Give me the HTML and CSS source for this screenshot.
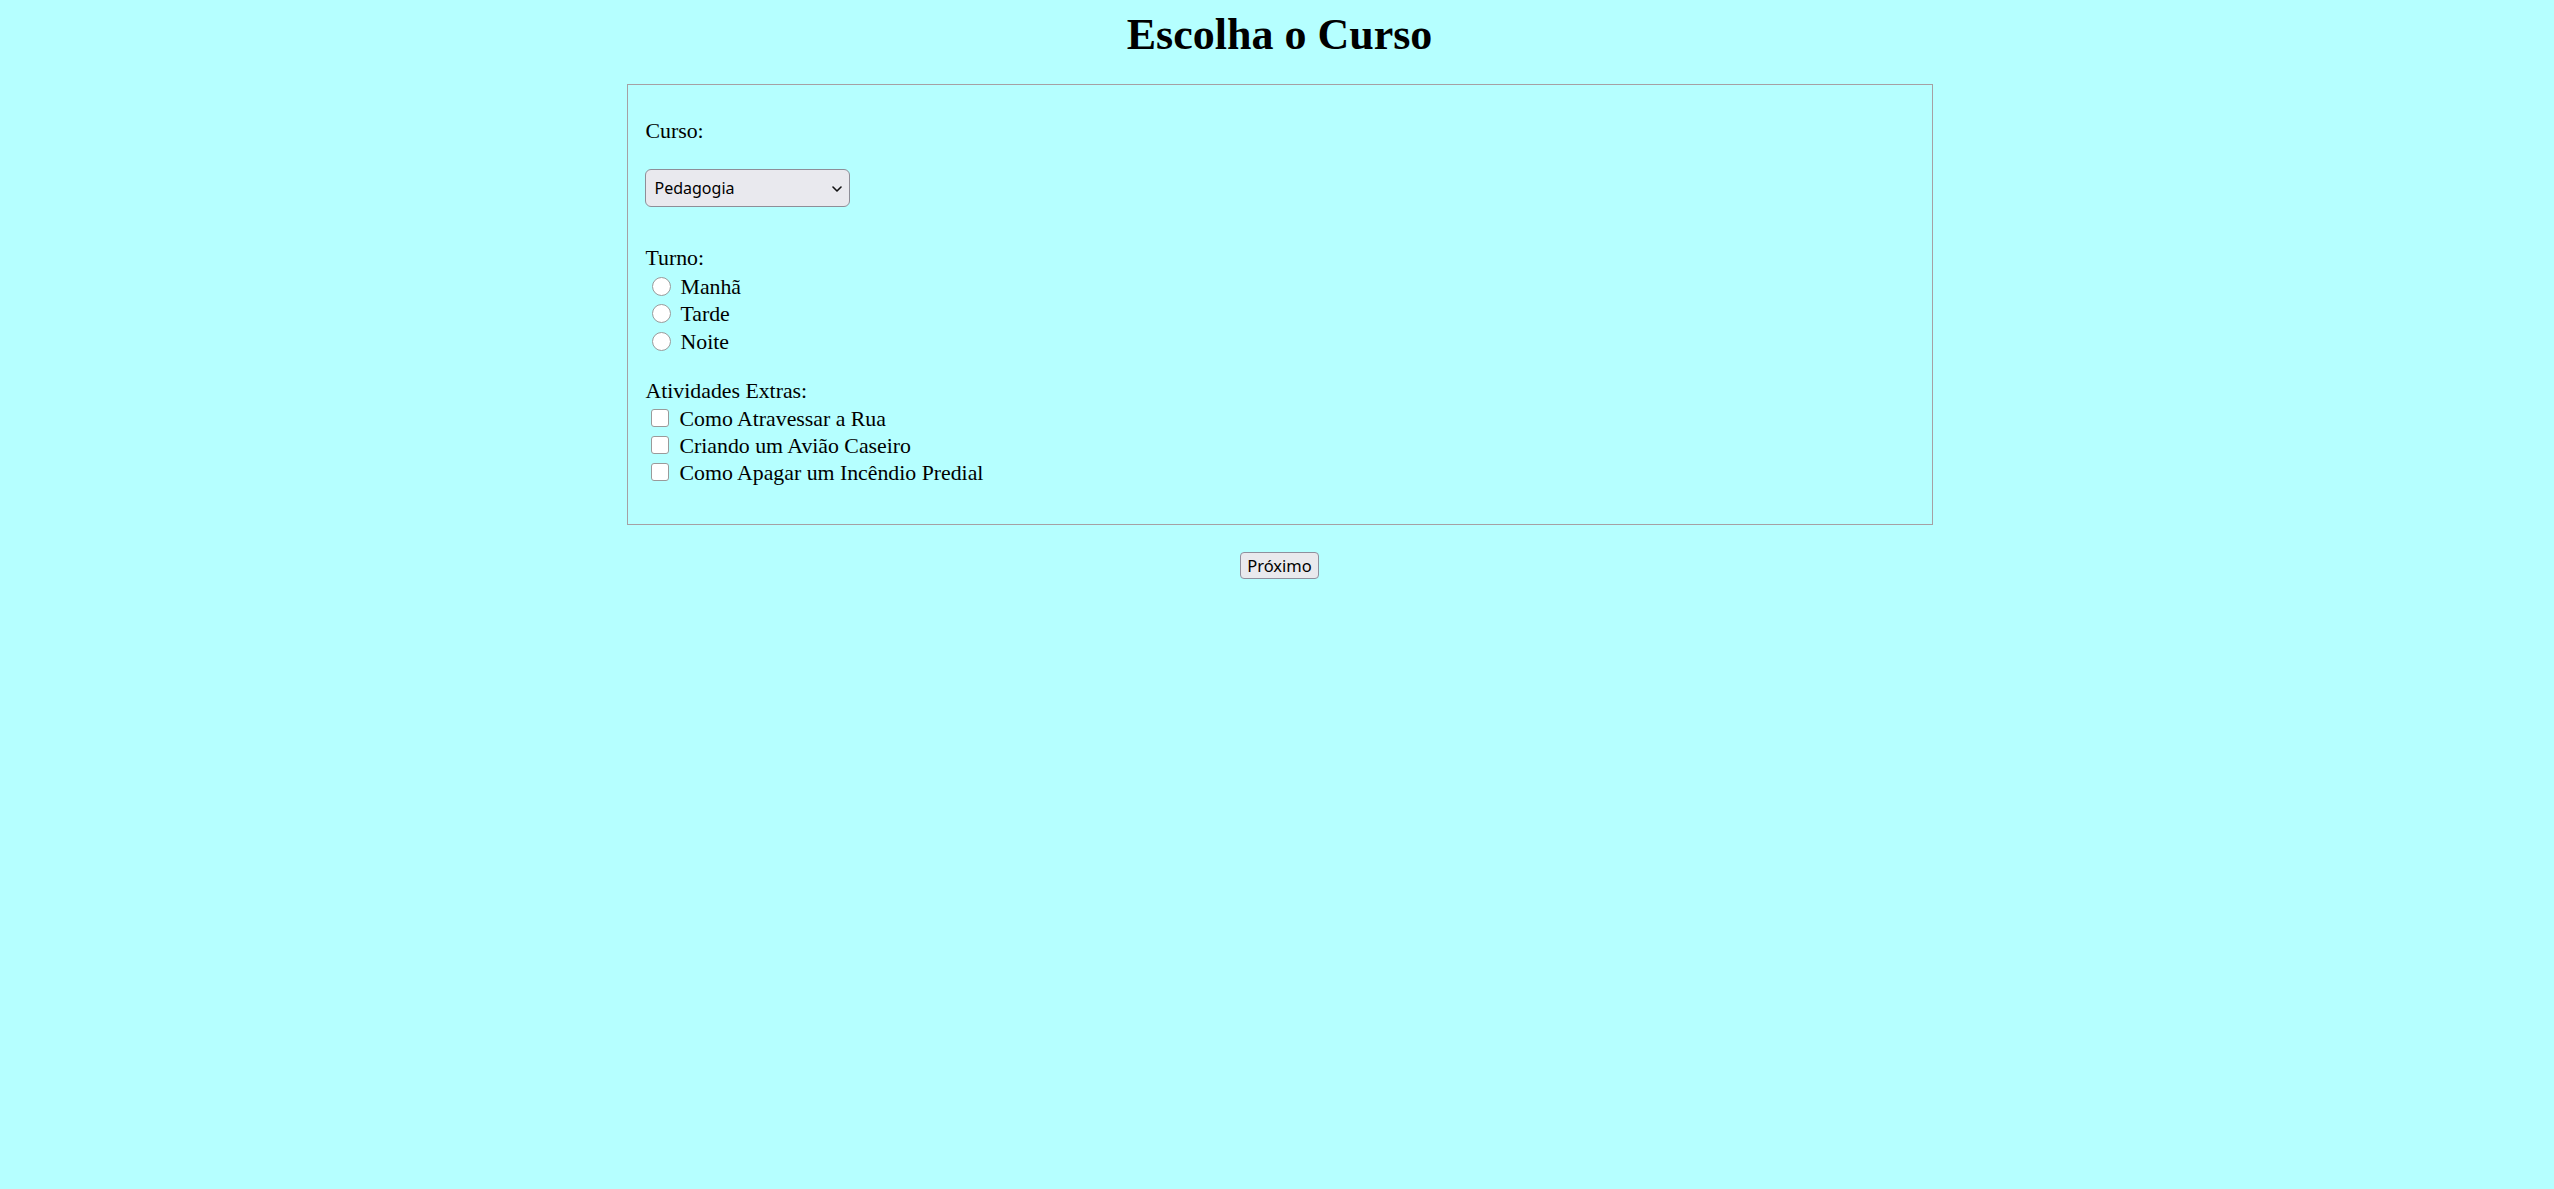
FILE: index.html
```html
<!DOCTYPE html>
<html lang="pt-BR">
<head>
<meta charset="utf-8">
<title>Escolha o Curso</title>
<link rel="stylesheet" href="styles.css">
</head>
<body>
<h1 class="title">Escolha o Curso</h1>
<form class="form">
  <fieldset class="panel">
    <div class="field-label">Curso:</div>
    <div class="select-row">
      <span class="select-wrap">
        <select class="select">
          <option>Pedagogia</option>
        </select>
        <svg class="chev" width="10" height="6" viewBox="0 0 10 6"><path d="M1 1 L5 5 L9 1" fill="none" stroke="#111" stroke-width="1.6" stroke-linecap="round" stroke-linejoin="round"/></svg>
      </span>
    </div>
    <div class="group turno">
      <div class="group-label">Turno:</div>
      <div class="options">
        <label class="option"><input type="radio" name="turno" class="radio">Manhã</label>
        <label class="option"><input type="radio" name="turno" class="radio">Tarde</label>
        <label class="option"><input type="radio" name="turno" class="radio">Noite</label>
      </div>
    </div>
    <div class="group extras">
      <div class="group-label">Atividades Extras:</div>
      <div class="options">
        <label class="option"><input type="checkbox" class="check">Como Atravessar a Rua</label>
        <label class="option"><input type="checkbox" class="check">Criando um Avião Caseiro</label>
        <label class="option"><input type="checkbox" class="check">Como Apagar um Incêndio Predial</label>
      </div>
    </div>
  </fieldset>
  <div class="actions"><button type="button" class="btn">Próximo</button></div>
</form>
</body>
</html>
```

FILE: styles.css
```css
html, body {
  margin: 0;
}
body {
  background: #b5ffff;
  color: #000;
  font-family: "Liberation Serif", "Times New Roman", serif;
  font-size: 21.8px;
  padding-left: 5px;
  min-height: 1189px;
  box-sizing: border-box;
}
.title {
  margin: 0;
  padding-top: 7.5px;
  padding-bottom: 0;
  height: 60px;
  box-sizing: border-box;
  font-size: 44px;
  line-height: 54px;
  font-weight: 700;
  text-align: center;
}
.form {
  width: 1306px;
  margin: 24px auto 0;
}
.panel {
  margin: 0;
  min-width: 0;
  border: 1px solid #a6a0a3;
  padding: 32.5px 18px 36.5px;
}
.field-label {
  line-height: 27px;
}
.select-row {
  margin-top: 24.5px;
  height: 38px;
}
.select-wrap {
  position: relative;
  display: inline-block;
  vertical-align: top;
  margin-left: -1px;
}
.select {
  appearance: none;
  -webkit-appearance: none;
  display: block;
  width: 205px;
  height: 38px;
  margin: 0;
  padding: 0 0 0 9px;
  font-family: "Noto Sans", sans-serif;
  font-size: 16px;
  color: #000;
  background: #e9e9ee;
  border: 1px solid #8e8e98;
  border-radius: 6px;
}
.chev {
  position: absolute;
  right: 8px;
  top: 17px;
}
.group {
  margin-top: 38px;
  line-height: 27.4px;
}
.turno .options {
  padding-top: 1.5px;
}
.extras {
  margin-top: 22px;
}
.option {
  display: block;
}
.radio {
  appearance: none;
  -webkit-appearance: none;
  display: inline-block;
  width: 19px;
  height: 19px;
  margin: 0 10px 0 6px;
  border: 1px solid #9a9a9a;
  border-radius: 50%;
  background: #fff;
  vertical-align: -2px;
  box-sizing: border-box;
}
.check {
  appearance: none;
  -webkit-appearance: none;
  display: inline-block;
  width: 18px;
  height: 18px;
  margin: 0 11px 0 5px;
  border: 1px solid #9a9a9a;
  border-radius: 3px;
  background: #fff;
  vertical-align: -1px;
  box-sizing: border-box;
}
.actions {
  text-align: center;
  padding-top: 27px;
}
.btn {
  width: 79px;
  height: 27px;
  padding: 0;
  margin: 0;
  font-family: "Noto Sans", sans-serif;
  font-size: 16.5px;
  line-height: 25px;
  color: #000;
  background: #e9e9ed;
  border: 1px solid #8f8f9d;
  border-radius: 4px;
}
```
